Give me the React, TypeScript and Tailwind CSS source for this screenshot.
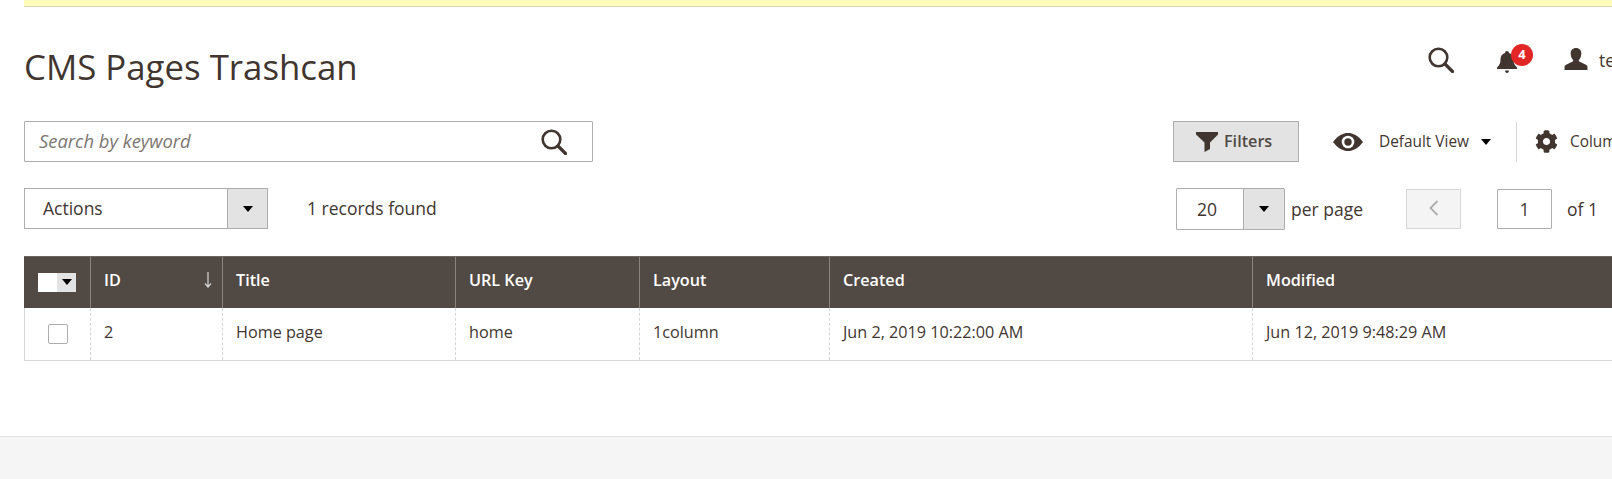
import { FaCog } from 'react-icons/fa';

function SearchIcon({ className }: { className: string }) {
  return (
    <svg viewBox="0 0 26 26" className={className} fill="none" stroke="currentColor">
      <circle cx="10.5" cy="10.5" r="8.8" strokeWidth="2.6" />
      <path d="M17 17l7.5 7.5" strokeWidth="3.2" strokeLinecap="round" />
    </svg>
  );
}

function Caret() {
  return <span className="w-0 h-0 border-x-[5px] border-x-transparent border-t-[6px] border-t-black" />;
}

function Funnel() {
  return (
    <svg viewBox="0 0 22 20" className="w-[22px] h-[20px]" fill="#41362f">
      <path d="M0 0h22v2.500l-8 8V17l-5.500 3v-9.500l-8.500-8z" />
    </svg>
  );
}

function Eye() {
  return (
    <svg viewBox="0 0 30 20" className="ml-[34px] w-[30px] h-[20px]">
      <path d="M0 10C5 3.500 10 1 15 1s10 2.500 15 9c-5 6.500-10 9-15 9S5 16.500 0 10z" fill="#41362f" />
      <circle cx="15" cy="10" r="6.300" fill="#fff" />
      <circle cx="15" cy="10" r="3.700" fill="#41362f" />
    </svg>
  );
}

function Bell() {
  return (
    <svg viewBox="0 0 20 22" className="w-[20px] h-[22px] mt-[3px]" fill="#41362f">
      <path d="M10 0c1.200 0 2 .8 2 1.900 3 .8 4.500 3.300 4.500 6.300 0 4 1 6 3.500 8.300v1.500H0v-1.500C2.500 14.200 3.500 12.200 3.500 8.200c0-3 1.500-5.500 4.500-6.300C8 .8 8.800 0 10 0z" />
      <path d="M8 19.500h4c0 1.300-.8 2.500-2 2.500s-2-1.200-2-2.500z" />
    </svg>
  );
}

function User() {
  return (
    <svg viewBox="0 0 24 23" className="w-[24px] h-[22px]" fill="#41362f">
      <path d="M12 0c3.600 0 5.600 2.400 5.600 5.800 0 2.500-1 5-2.300 6.400-.5.600-.5 1.500.1 2l7 3.300c1 .5 1.600 1.300 1.600 2.300V23H0v-3.200c0-1 .6-1.800 1.600-2.300l7-3.300c.6-.5.6-1.400.1-2C7.400 10.800 6.400 8.300 6.400 5.800 6.400 2.400 8.400 0 12 0z" />
    </svg>
  );
}

const columns = [
  { title: 'Title', value: 'Home page', width: 'w-[233px]' },
  { title: 'URL Key', value: 'home', width: 'w-[184px]' },
  { title: 'Layout', value: '1column', width: 'w-[190px]' },
  { title: 'Created', value: 'Jun 2, 2019 10:22:00 AM', width: 'w-[423px]' },
  { title: 'Modified', value: 'Jun 12, 2019 9:48:29 AM', width: 'w-[400px]' },
];

export default function App() {
  return (
    <div className="w-[1612px] h-[479px] overflow-hidden bg-white flex flex-col text-[#41362f] text-[17.5px] font-['Open_Sans',sans-serif]">
      <div className="ml-[24px] h-[7px] shrink-0 bg-[#fffbbb] border-b border-[#d9d6a8]" />

      <div className="flex-1 pl-[24px] w-[1720px]">
        <div className="flex items-center h-[50px] mt-[28px]">
          <h1 className="w-[1404px] pt-[14px] text-[34.800px] leading-none">CMS Pages Trashcan</h1>
          <SearchIcon className="w-[26px] h-[26px]" />
          <span className="relative ml-[43px]">
            <Bell />
            <span className="absolute -top-[4px] left-[14px] w-[22px] h-[22px] rounded-full bg-[#e22626] text-white text-[13px] font-bold flex items-center justify-center">4</span>
          </span>
          <span className="ml-[47px] -mt-[2px]"><User /></span>
          <span className="ml-[11px]">test</span>
        </div>

        <div className="flex items-center mt-[36px] h-[41px]">
          <div className="w-[569px] h-full border border-[#adadad] rounded-[1px] flex items-center justify-between pl-[14px] pr-[25px]">
            <span className="italic text-[#7b7672] text-[18.400px] -mt-[1px]">Search by keyword</span>
            <SearchIcon className="w-[26px] h-[26px]" />
          </div>
          <button className="ml-[580px] w-[126px] h-full border border-[#adadad] bg-[#e3e3e3] flex items-center pl-[22px] gap-[6px] font-semibold text-[16.200px] text-[#514943]">
            <Funnel />
            Filters
          </button>
          <Eye />
          <span className="ml-[16px] text-[15.400px]">Default View</span>
          <span className="ml-[12px] flex"><Caret /></span>
          <span className="ml-[25px] h-[40px] border-l border-[#d6d6d6]" />
          <FaCog className="ml-[18px] w-[23px] h-[23px] text-[#41362f]" />
          <span className="ml-[12px] text-[15.400px]">Columns</span>
        </div>

        <div className="flex items-center mt-[26px] h-[42px]">
          <div className="w-[244px] h-[41px] -mt-[1px] border border-[#adadad] flex">
            <span className="flex-1 pl-[18px] pb-[1px] flex items-center">Actions</span>
            <span className="w-[40px] bg-[#e3e3e3] border-l border-[#adadad] flex items-center justify-center"><Caret /></span>
          </div>
          <span className="ml-[39px] w-[869px] -mt-[2px]">1 records found</span>
          <div className="w-[109px] h-full border border-[#adadad] rounded-[1px] flex">
            <span className="flex-1 pl-[20px] flex items-center">20</span>
            <span className="w-[41px] bg-[#e3e3e3] border-l border-[#adadad] flex items-center justify-center"><Caret /></span>
          </div>
          <span className="ml-[6px] w-[115px]">per page</span>
          <span className="w-[55px] h-[40px] bg-[#f4f4f4] border border-[#d6d6d6] flex items-center justify-center">
            <svg viewBox="0 0 10 16" className="w-[10px] h-[16px] mb-[3px]" fill="none" stroke="#adadad" strokeWidth="1.800"><path d="M8.500 1L1.500 8l7 7" /></svg>
          </span>
          <span className="ml-[36px] w-[55px] h-[40px] border border-[#adadad] rounded-[1px] flex items-center justify-center">1</span>
          <span className="ml-[15px]">of 1</span>
        </div>

        <div className="mt-[26px] w-[1700px] text-[16.200px]">
          <div className="flex h-[52px] bg-[#514943] border-t border-[#6e655f] text-white font-semibold">
            <div className="w-[66px] shrink-0 flex items-center justify-center pb-[1px]">
              <span className="w-[19px] h-[19px] bg-white" />
              <span className="w-[19px] h-[19px] bg-[#e3e3e3] flex items-center justify-center"><Caret /></span>
            </div>
            <div className="w-[132px] shrink-0 border-l border-[#8a837e] pl-[13px] pr-[10px] pb-[5px] flex items-center justify-between">
              <span>ID</span>
              <svg viewBox="0 0 8 16" className="w-[8px] h-[16px]" fill="none" stroke="#d6d6d6" strokeWidth="1.200"><path d="M4 0v15M1 11.500L4 15l3-3.500" /></svg>
            </div>
            {columns.map((c) => (
              <div key={c.title} className={`${c.width} shrink-0 border-l border-[#8a837e] px-[13px] pb-[5px] flex items-center`}>{c.title}</div>
            ))}
          </div>
          <div className="flex h-[53px] border-x border-b border-[#d6d6d6]">
            <div className="w-[65px] shrink-0 flex items-center justify-center">
              <span className="w-[20px] h-[20px] border border-[#adadad] rounded-[2px]" />
            </div>
            <div className="w-[132px] shrink-0 border-l border-dashed border-[#d6d6d6] px-[13px] pb-[3px] flex items-center">2</div>
            {columns.map((c) => (
              <div key={c.title} className={`${c.width} shrink-0 border-l border-dashed border-[#d6d6d6] px-[13px] pb-[3px] flex items-center`}>{c.value}</div>
            ))}
          </div>
        </div>
      </div>

      <div className="h-[43px] shrink-0 bg-[#f5f5f5] border-t border-[#e3e3e3]" />
    </div>
  );
}
